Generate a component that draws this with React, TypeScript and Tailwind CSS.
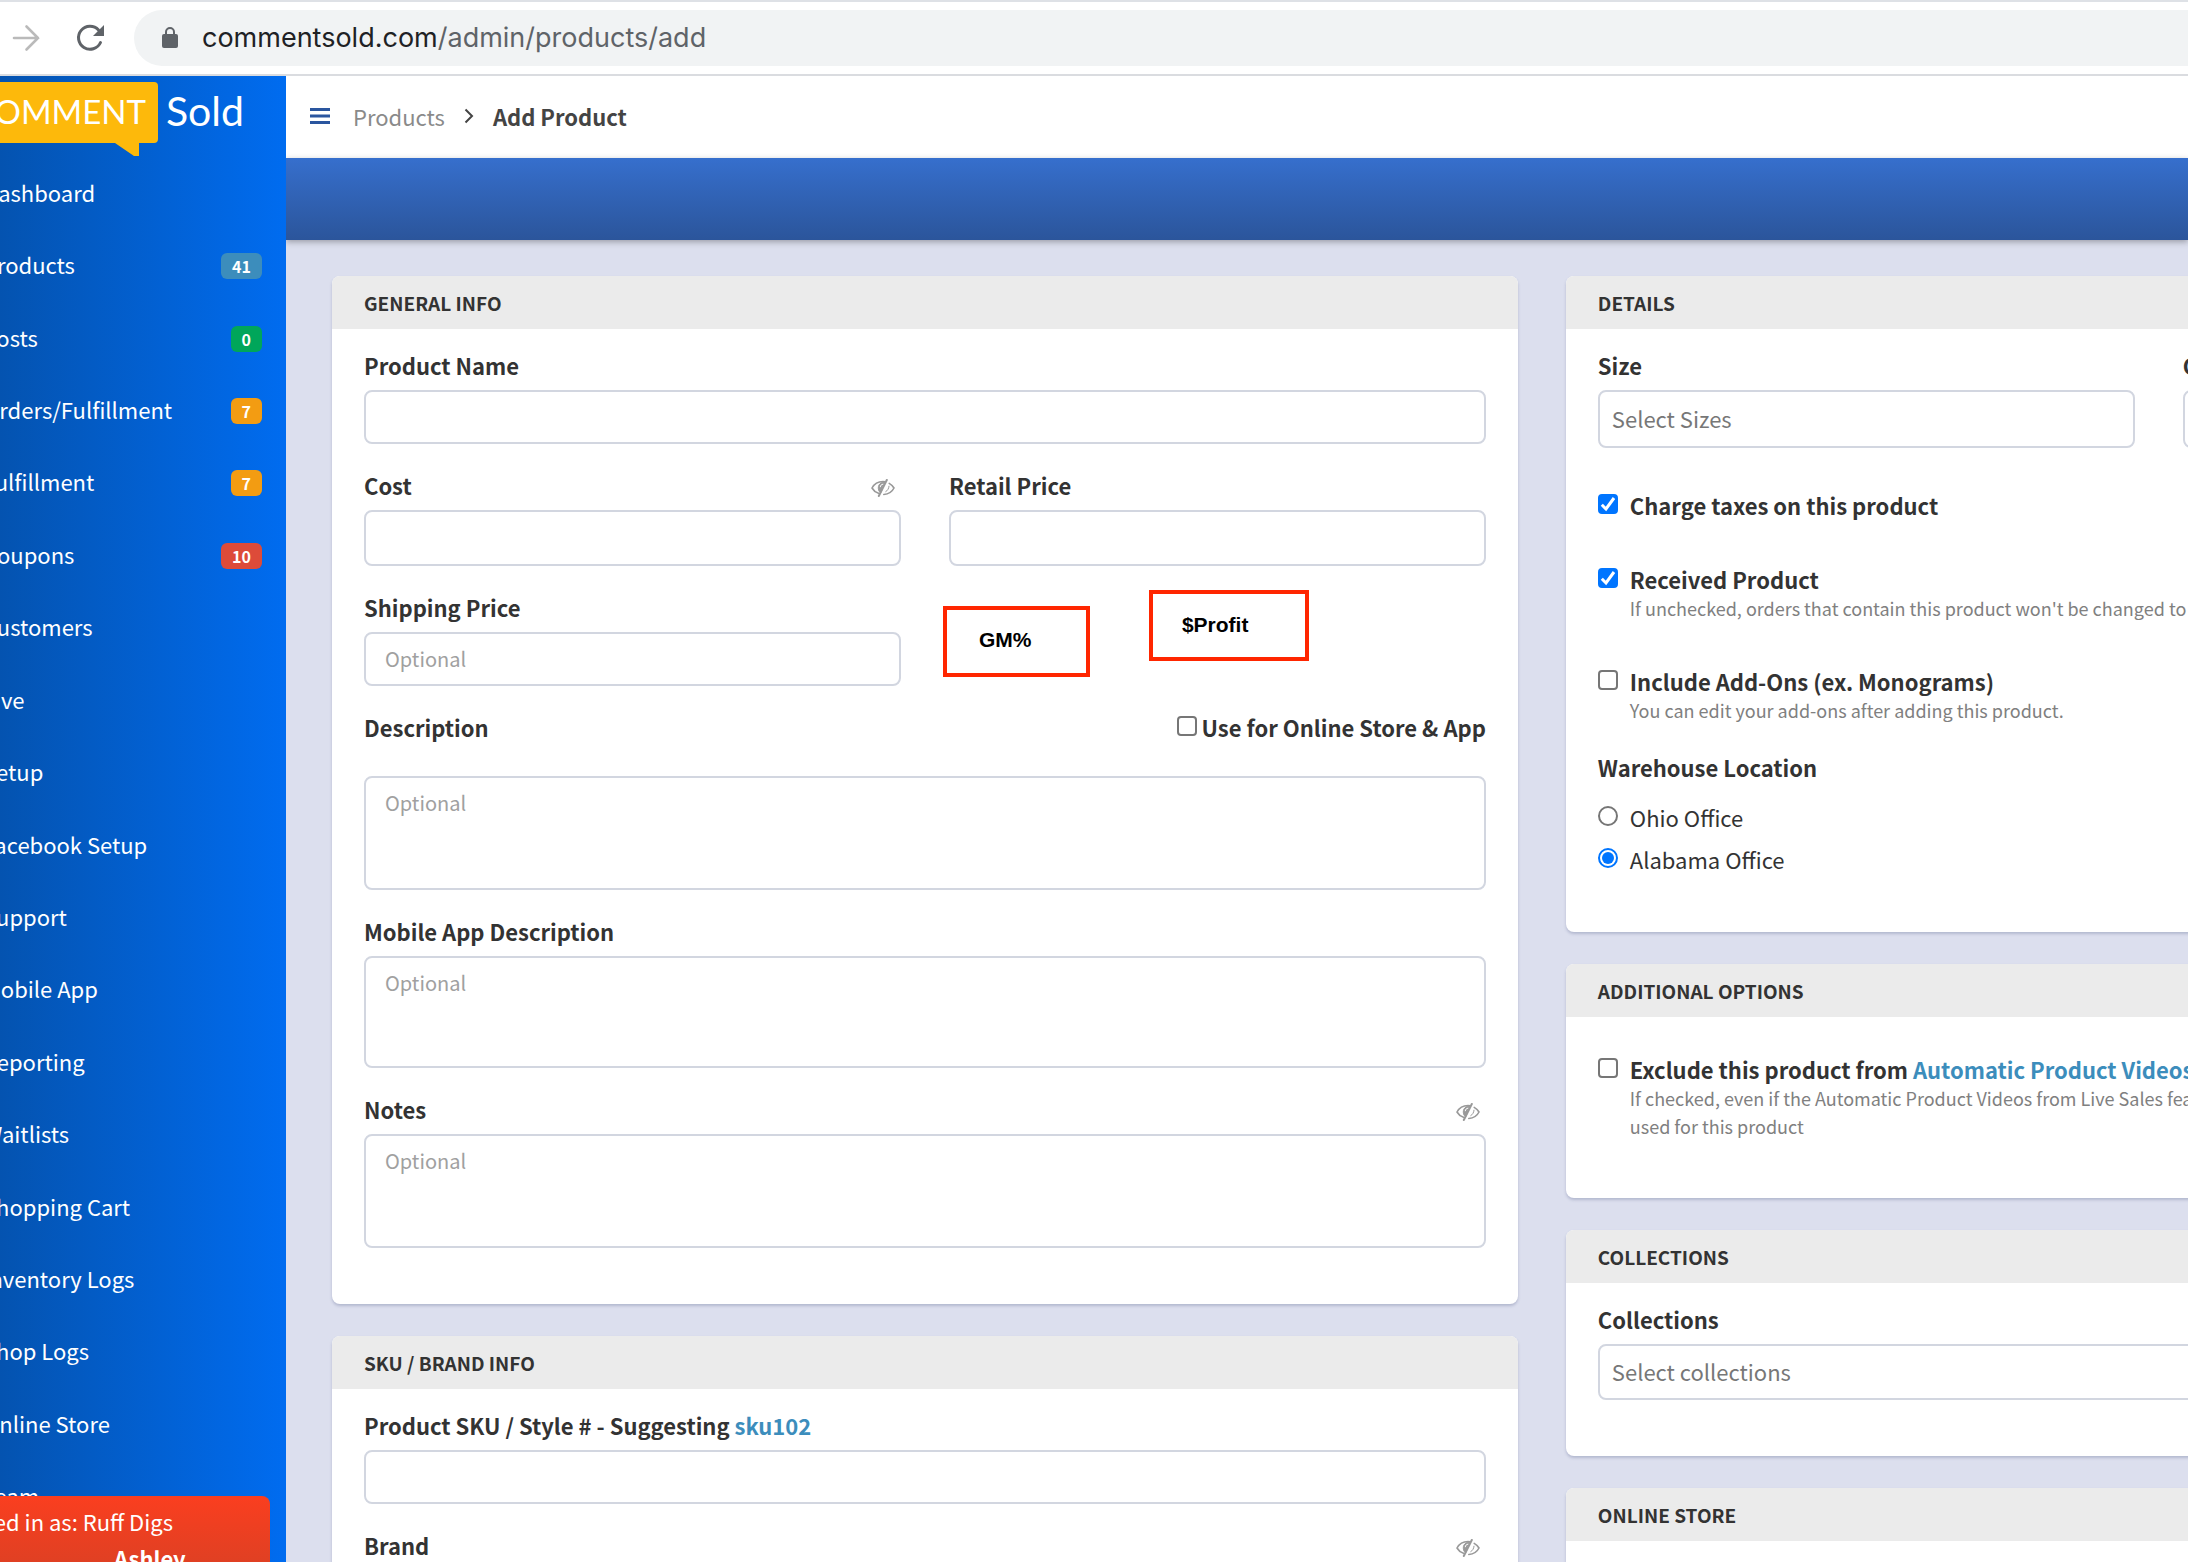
import { useState } from "react";
import type { ReactNode } from "react";

const navItems: { label: string; badge?: string; tone?: string }[] = [
  { label: "Dashboard" },
  { label: "Products", badge: "41", tone: "bg-[#3c8dbc]" },
  { label: "Posts", badge: "0", tone: "bg-[#00a65a]" },
  { label: "Orders/Fulfillment", badge: "7", tone: "bg-[#f39c12]" },
  { label: "Fulfillment", badge: "7", tone: "bg-[#f39c12]" },
  { label: "Coupons", badge: "10", tone: "bg-[#dd4b39]" },
  { label: "Customers" },
  { label: "Live" },
  { label: "Setup" },
  { label: "Facebook Setup" },
  { label: "Support" },
  { label: "Mobile App" },
  { label: "Reporting" },
  { label: "Waitlists" },
  { label: "Shopping Cart" },
  { label: "Inventory Logs" },
  { label: "Shop Logs" },
  { label: "Online Store" },
  { label: "Team" },
];

const inputClass =
  "block w-full rounded-lg border-2 border-[#d2d6e0] bg-white px-[19px] pb-0.5 text-[20px] text-[#333] placeholder:text-[#a0a0a0] outline-none";

const pickerClass =
  "block w-full rounded-lg border-2 border-[#d2d6e0] bg-white px-3 pb-0.5 outline-none placeholder:text-[#777]";

function HiddenIcon() {
  return (
    <svg viewBox="0 0 24 18" className="h-[18px] w-6" fill="none" stroke="#999" strokeWidth="1.6" strokeLinecap="round">
      <path d="M7.500 14.300C4.500 13.300 2.300 11.300 1 9C3 5.200 7 2.500 12 2.500C12.800 2.500 13.500 2.600 14.200 2.700" />
      <path d="M15.800 1L7.800 17" strokeWidth="2" />
      <path d="M13.500 3.200C8 3 5.800 8 8.300 12.600L9.500 13.500Z" fill="#999" strokeWidth="1" />
      <path d="M11.800 5.200C10.300 5.400 9.400 6.400 9.300 7.800" stroke="#fff" strokeWidth="1" />
      <path d="M18.200 4.400C20.300 5.600 22 7.300 23 9C21.300 12.400 17.800 15.200 12.800 15.500" />
      <path d="M18 7.200C17.800 9.700 16.600 11.500 14.800 12.600" strokeWidth="1" />
    </svg>
  );
}

function Card({ title, children }: { title: string; children: ReactNode }) {
  return (
    <section className="overflow-hidden rounded-lg bg-white shadow-[0_2px_3px_rgba(60,70,120,0.25)]">
      <h2 className="flex h-[53px] items-center bg-[#ebebeb] px-8 text-[19px] font-bold text-[#333]">{title}</h2>
      <div className="px-8 pt-6 pb-14">{children}</div>
    </section>
  );
}

function Label({ id, children, hidden }: { id: string; children: ReactNode; hidden?: boolean }) {
  return (
    <div className="mb-[13px] flex h-6 items-center justify-between">
      <label htmlFor={id} className="font-bold">
        {children}
      </label>
      {hidden && (
        <button type="button" aria-label="Hidden from customers" className="mt-1.5 mr-1.5">
          <HiddenIcon />
        </button>
      )}
    </div>
  );
}

function Check({ id, checked, children }: { id: string; checked?: boolean; children: ReactNode }) {
  const [on, setOn] = useState(!!checked);
  return (
    <div className="flex h-7 items-center gap-3">
      <span className="relative -mt-0.5 flex size-5 shrink-0">
        <input
          id={id}
          type="checkbox"
          checked={on}
          onChange={(e) => setOn(e.target.checked)}
          className="size-5 appearance-none rounded-[4px] border-2 border-[#767676] bg-white checked:border-[#0075ff] checked:bg-[#0075ff]"
        />
        {on && (
          <svg viewBox="0 0 20 20" className="pointer-events-none absolute inset-0 size-5" fill="none" stroke="#fff" strokeWidth="3">
            <path d="M3.800 10.800L8 15L16 4" />
          </svg>
        )}
      </span>
      <label htmlFor={id} className="font-bold whitespace-nowrap">
        {children}
      </label>
    </div>
  );
}

function Help({ children }: { children: ReactNode }) {
  return <p className="ml-8 pt-px text-[18px] whitespace-nowrap text-[#808080]">{children}</p>;
}

function Radio({ id, checked, onPick, children }: { id: string; checked: boolean; onPick: () => void; children: ReactNode }) {
  return (
    <div className="flex h-[42px] items-center gap-3">
      <span className="relative -mt-0.5 flex size-5 shrink-0">
        <input
          id={id}
          type="radio"
          name="warehouse"
          checked={checked}
          onChange={onPick}
          className="size-5 appearance-none rounded-full border-2 border-[#767676] bg-white checked:border-[#0075ff]"
        />
        {checked && <span className="pointer-events-none absolute inset-1 rounded-full bg-[#0075ff]" />}
      </span>
      <label htmlFor={id}>{children}</label>
    </div>
  );
}

function BrowserBar() {
  return (
    <header className="flex h-[76px] shrink-0 items-center border-t-2 border-b-2 border-t-[#dee1e6] border-b-[#dadce0] bg-white">
      <button type="button" aria-label="Forward" className="ml-3">
        <svg viewBox="0 0 28 28" className="size-7" fill="none" stroke="#bababa" strokeWidth="2.6" strokeLinecap="round">
          <path d="M2 14H26M14.500 2.500L26 14L14.500 25.500" />
        </svg>
      </button>
      <button type="button" aria-label="Reload" className="ml-9">
        <svg viewBox="0 0 28 28" className="size-7" fill="none" stroke="#5f6368" strokeWidth="3" strokeLinecap="round">
          <path d="M24.500 18.500A11.500 11.500 0 1 1 22.500 6" />
          <path d="M28 1V12H17Z" fill="#5f6368" stroke="none" />
        </svg>
      </button>
      <div className="ml-[30px] flex h-14 flex-1 items-center rounded-l-full bg-[#f1f3f4] pl-7">
        <svg viewBox="0 0 16 22" className="h-[22px] w-4" fill="#5f6368">
          <rect x="0" y="7" width="16" height="14" rx="2" />
          <path d="M4 8V5A4 4 0 0 1 12 5V8" fill="none" stroke="#5f6368" strokeWidth="2" />
        </svg>
        <p className="ml-6 font-['Inter',sans-serif] text-[27px] text-[#202124]">
          commentsold.com<span className="text-[#5f6368]">/admin/products/add</span>
        </p>
      </div>
    </header>
  );
}

function Logo() {
  return (
    <div className="relative h-[81px] shrink-0 font-['Lato',sans-serif] text-white">
      <svg viewBox="0 0 160 75" className="absolute top-1.5 left-0 h-[75px] w-40" fill="#fdb90b">
        <path d="M0 0H154Q158 0 158 4V57Q158 61 154 61H139V74H134L115 61H0Z" />
      </svg>
      <div className="relative flex h-[70px] items-center">
        <span className="flex w-[146px] justify-end text-[33px]">COMMENT</span>
        <span className="ml-5 text-[41px]">Sold</span>
      </div>
    </div>
  );
}

function Sidebar() {
  return (
    <aside className="relative w-[286px] shrink-0 overflow-hidden bg-linear-to-r from-[#0453b0] to-[#006cf0] text-white">
      <Logo />
      <nav className="-ml-[17px] flex min-h-[1376px] flex-col pr-6">
        {navItems.map((item) => (
          <a key={item.label} href="#" className="flex flex-1 items-center justify-between">
            <span className="pb-[3px]">{item.label}</span>
            {item.badge && (
              <span className={`${item.tone} mt-px flex h-[26px] items-center rounded-md px-[11px] text-[16px] font-bold`}>
                {item.badge}
              </span>
            )}
          </a>
        ))}
      </nav>
      <div className="absolute bottom-0 left-0 h-[66px] w-[270px] overflow-hidden rounded-tr-lg bg-linear-to-b from-[#fa3e1f] to-[#e04023]">
        <p className="flex h-[50px] w-[173px] items-center justify-end whitespace-nowrap">Logged in as: Ruff Digs</p>
        <p className="-mt-0.5 ml-[114px] leading-7 font-bold">Ashley</p>
      </div>
    </aside>
  );
}

export default function App() {
  const [office, setOffice] = useState("alabama");
  return (
    <div className="flex h-screen flex-col overflow-hidden bg-[#dcdfee] font-['Noto_Sans_CJK_SC','Noto_Sans',sans-serif] text-[22px] leading-7 text-[#333]">
      <BrowserBar />
      <div className="flex min-h-0 flex-1">
        <Sidebar />
        <main className="min-w-0 flex-1 overflow-hidden">
          <div className="flex h-[82px] items-center bg-white pb-0.5 pl-6">
            <button type="button" aria-label="Toggle menu">
              <svg viewBox="0 0 20 16" className="h-4 w-5" fill="#2a569f">
                <path d="M0 0H20V3H0ZM0 6.500H20V9.500H0ZM0 13H20V16H0Z" />
              </svg>
            </button>
            <a href="#" className="ml-[23px] text-[#8a8a8a]">Products</a>
            <svg viewBox="0 0 10 16" className="mx-[19px] h-4 w-2.5" fill="none" stroke="#444" strokeWidth="2">
              <path d="M1.500 1.500L8 8L1.500 14.500" />
            </svg>
            <h1 className="font-bold text-[#444]">Add Product</h1>
          </div>
          <div className="h-[82px] bg-linear-to-b from-[#366fcd] to-[#2b559b] shadow-[0_2px_6px_rgba(0,0,0,0.3)]" />
          <form className="grid w-[133%] grid-cols-2 items-start gap-x-12 pt-9 pr-16 pl-[46px]">
            <div className="flex flex-col gap-8">
              <Card title="GENERAL INFO">
                <Label id="name">Product Name</Label>
                <input id="name" className={`${inputClass} h-[54px]`} />
                <div className="mt-[29px] grid grid-cols-2 gap-x-12 gap-y-[29px]">
                  <div>
                    <Label id="cost" hidden>Cost</Label>
                    <input id="cost" className={`${inputClass} h-14`} />
                  </div>
                  <div>
                    <Label id="retail">Retail Price</Label>
                    <input id="retail" className={`${inputClass} h-14`} />
                  </div>
                  <div>
                    <Label id="shipping">Shipping Price</Label>
                    <input id="shipping" placeholder="Optional" className={`${inputClass} h-[54px]`} />
                  </div>
                  <div className="relative font-['Liberation_Sans',sans-serif] text-[21px] font-bold text-black">
                    <div className="absolute top-[11px] -left-1.5 flex h-[71px] w-[147px] items-center border-4 border-[#ff2600] pb-1 pl-8">GM%</div>
                    <div className="absolute -top-[5px] left-[200px] flex h-[71px] w-40 items-center border-4 border-[#ff2600] pb-0.5 pl-[29px]">$Profit</div>
                  </div>
                </div>
                <div className="mt-[29px] mb-[37px] flex h-6 items-center justify-between">
                  <label htmlFor="description" className="font-bold">Description</label>
                  <div className="flex items-center gap-[5px]">
                    <input id="use-online" type="checkbox" className="-mt-0.5 size-5 appearance-none rounded-[4px] border-2 border-[#767676] bg-white checked:bg-[#0075ff]" />
                    <label htmlFor="use-online" className="font-bold">Use for Online Store &amp; App</label>
                  </div>
                </div>
                <textarea id="description" placeholder="Optional" className={`${inputClass} h-[114px] resize-none pt-[11px]`} />
                <div className="mt-[29px]">
                  <Label id="mobile">Mobile App Description</Label>
                  <textarea id="mobile" placeholder="Optional" className={`${inputClass} h-28 resize-none pt-[11px]`} />
                </div>
                <div className="mt-[29px]">
                  <Label id="notes" hidden>Notes</Label>
                  <textarea id="notes" placeholder="Optional" className={`${inputClass} h-[114px] resize-none pt-[11px]`} />
                </div>
              </Card>
              <Card title="SKU / BRAND INFO">
                <Label id="sku">
                  Product SKU / Style # - Suggesting <a href="#" className="text-[#3c8dbc]">sku102</a>
                </Label>
                <input id="sku" className={`${inputClass} h-[54px]`} />
                <div className="mt-[29px]">
                  <Label id="brand" hidden>Brand</Label>
                  <input id="brand" className={`${inputClass} h-[54px]`} />
                </div>
              </Card>
            </div>

            <div className="flex flex-col gap-8">
              <Card title="DETAILS">
                <div className="grid grid-cols-2 gap-x-12">
                  <div>
                    <Label id="size">Size</Label>
                    <input id="size" placeholder="Select Sizes" className={`${pickerClass} h-[58px]`} />
                  </div>
                  <div>
                    <Label id="color">Color</Label>
                    <input id="color" placeholder="Select Colors" className={`${pickerClass} h-[58px]`} />
                  </div>
                </div>
                <div className="mt-[43px]">
                  <Check id="taxes" checked>Charge taxes on this product</Check>
                </div>
                <div className="mt-[46px]">
                  <Check id="received" checked>Received Product</Check>
                  <Help>If unchecked, orders that contain this product won't be changed to paid until it is received.</Help>
                </div>
                <div className="mt-[45px]">
                  <Check id="addons">Include Add-Ons (ex. Monograms)</Check>
                  <Help>You can edit your add-ons after adding this product.</Help>
                </div>
                <fieldset className="-mb-1">
                  <legend className="mb-[15px] pt-[29px] font-bold">Warehouse Location</legend>
                  <Radio id="ohio" checked={office === "ohio"} onPick={() => setOffice("ohio")}>Ohio Office</Radio>
                  <Radio id="alabama" checked={office === "alabama"} onPick={() => setOffice("alabama")}>Alabama Office</Radio>
                </fieldset>
              </Card>
              <Card title="ADDITIONAL OPTIONS">
                <div className="pt-3.5 pb-0.5">
                  <Check id="exclude">
                    Exclude this product from <a href="#" className="text-[#3c8dbc]">Automatic Product Videos From Live Sales</a>
                  </Check>
                  <Help>
                    If checked, even if the Automatic Product Videos from Live Sales feature is on, videos will not be
                    <br />
                    used for this product
                  </Help>
                </div>
              </Card>
              <Card title="COLLECTIONS">
                <Label id="collections">Collections</Label>
                <input id="collections" placeholder="Select collections" className={`${pickerClass} h-14`} />
              </Card>
              <Card title="ONLINE STORE">
                <Label id="store-title">Title</Label>
                <input id="store-title" className={`${inputClass} h-[54px]`} />
              </Card>
            </div>
          </form>
        </main>
      </div>
    </div>
  );
}
